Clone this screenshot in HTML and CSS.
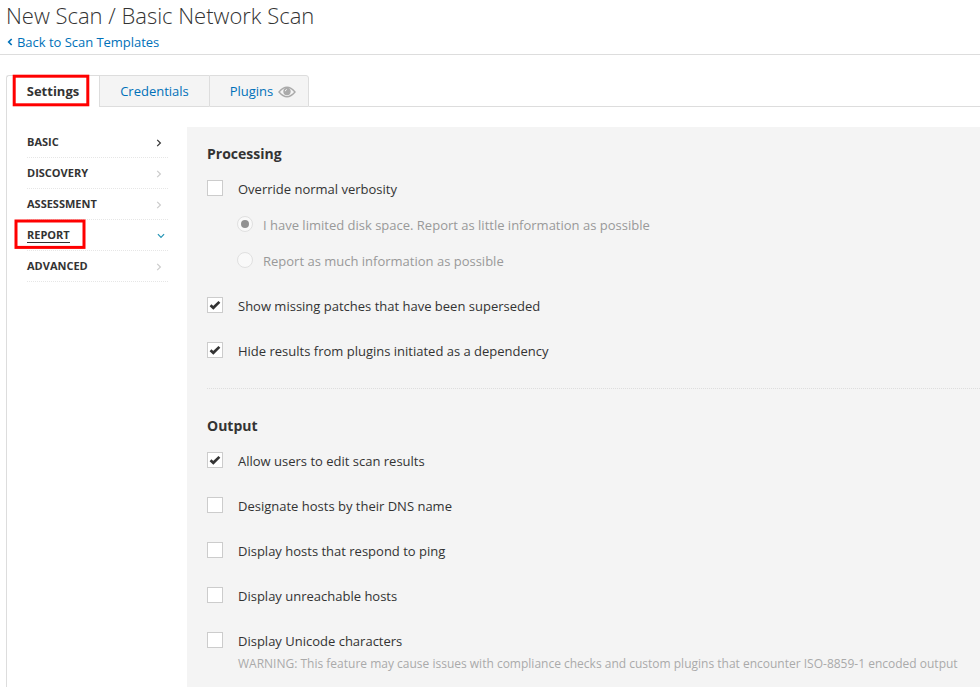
FILE: index.html
```html
<!DOCTYPE html>
<html lang="en">
<head>
<meta charset="utf-8">
<title>New Scan / Basic Network Scan</title>
<link rel="stylesheet" href="styles.css">
</head>
<body>
<svg class="defs" width="0" height="0" aria-hidden="true">
  <symbol id="chevron" viewBox="0 0 6 8"><path d="M1.2 .9 4.4 4 1.2 7.1" fill="none" stroke="currentColor" stroke-width="1.2"/></symbol>
  <symbol id="check" viewBox="0 0 12 10"><path d="M1.5 5.3 4.3 7.8 10.4 1.9" fill="none" stroke="#333" stroke-width="2.7"/></symbol>
</svg>
<header class="header">
  <h1>New Scan / Basic Network Scan</h1>
  <a class="back"><svg width="6" height="8" viewBox="0 0 6 8"><path d="M4.7 1 1.7 4l3 3" fill="none" stroke="currentColor" stroke-width="1.7"/></svg>Back to Scan Templates</a>
</header>
<nav class="tabs">
  <a class="tab active"><span>Settings</span><svg class="mark" width="78" height="33"><rect x="2.2" y="2.2" width="73.6" height="28.6" fill="none" stroke="#f00" stroke-width="3"/></svg></a>
  <a class="tab credentials">Credentials</a>
  <a class="tab plugins">Plugins
    <svg width="18" height="12" viewBox="0 0 18 12"><path d="M1 6Q9-3.4 17 6 9 15.4 1 6Z" fill="#f4f4f4" stroke="#aaa" stroke-width="1.4"/><circle cx="9" cy="5.5" r="3.7" fill="#aaa"/><path d="M7.3 5.2a1.8 1.8 0 0 1 1.5-1.7" fill="none" stroke="#f4f4f4" stroke-width="1"/></svg>
  </a>
</nav>
<div class="body">
  <nav class="menu">
    <a class="current">BASIC<svg class="arrow"><use href="#chevron"/></svg></a>
    <a>DISCOVERY<svg class="arrow"><use href="#chevron"/></svg></a>
    <a>ASSESSMENT<svg class="arrow"><use href="#chevron"/></svg></a>
    <a class="open"><span>REPORT</span><svg class="arrow"><use href="#chevron"/></svg><svg class="mark" width="73" height="31"><rect x="2" y="2" width="68" height="26.4" fill="none" stroke="#f00" stroke-width="3"/></svg></a>
    <a>ADVANCED<svg class="arrow"><use href="#chevron"/></svg></a>
  </nav>
  <main class="panel">
    <section>
      <h2>Processing</h2>
      <div class="option"><i class="box"></i><span>Override normal verbosity</span></div>
      <div class="choices">
        <div class="choice"><i class="radio on"></i><span>I have limited disk space. Report as little information as possible</span></div>
        <div class="choice"><i class="radio"></i><span>Report as much information as possible</span></div>
      </div>
      <div class="option"><i class="box"><svg><use href="#check"/></svg></i><span>Show missing patches that have been superseded</span></div>
      <div class="option"><i class="box"><svg><use href="#check"/></svg></i><span>Hide results from plugins initiated as a dependency</span></div>
    </section>
    <section>
      <h2>Output</h2>
      <div class="option"><i class="box"><svg><use href="#check"/></svg></i><span>Allow users to edit scan results</span></div>
      <div class="option"><i class="box"></i><span>Designate hosts by their DNS name</span></div>
      <div class="option"><i class="box"></i><span>Display hosts that respond to ping</span></div>
      <div class="option"><i class="box"></i><span>Display unreachable hosts</span></div>
      <div class="option"><i class="box"></i><span>Display Unicode characters<small>WARNING: This feature may cause issues with compliance checks and custom plugins that encounter ISO-8859-1 encoded output</small></span></div>
    </section>
  </main>
</div>
</body>
</html>
```
FILE: styles.css
```css
*, ::before, ::after { box-sizing: border-box; }
body { margin: 0; height: 687px; overflow: hidden; background: #fff; color: #333; font: 13px/18px "Open Sans", sans-serif; }
svg { display: block; }
.defs { position: absolute; }
.header { height: 55px; padding: 0 6px; border-bottom: 1px solid #ddd; }
h1 { margin: 0; font-size: 22px; line-height: 30px; font-weight: 300; letter-spacing: -.01px; }
.back { display: flex; align-items: center; gap: 4px; margin-top: 3px; padding-left: 1px; color: #0071b9; letter-spacing: -.03px; }
.tabs { display: flex; height: 32px; margin: 20px 0 0 6px; }
.tabs::after { content: ""; flex: 1; border-bottom: 1px solid #ddd; }
.tab { display: flex; align-items: center; justify-content: center; border: 1px solid #ddd; border-right: 0; background: #f4f4f4; color: #0071b9; }
.active { position: relative; width: 93px; padding-bottom: 1px; background: #fff; border-bottom: 0; border-top-left-radius: 3px; color: #333; font-weight: 700; }
.mark { position: absolute; }
.active .mark { left: 5px; top: -2px; }
.open .mark { left: -13px; top: -1px; }
.credentials { width: 110px; }
.plugins { width: 100px; gap: 6px; border-right: 1px solid #ddd; border-top-right-radius: 3px; padding-left: 8px; }
.plugins svg { margin: 2px 0 0 -1px; }
.body { display: flex; height: 580px; margin-left: 6px; padding: 20px 0 0 20px; border-left: 1px solid #ddd; }
.menu { width: 160px; padding-right: 19px; }
.menu a { position: relative; display: flex; align-items: center; justify-content: space-between; height: 31px; border-bottom: 1px dotted #e6e6e6; font-size: 11px; font-weight: 700; line-height: 16px; }
.arrow { width: 6px; height: 8px; margin: 2px 6px 0 0; color: #ccc; }
.current .arrow { color: #333; }
.open span { height: 16px; border-bottom: 1px solid #333; line-height: 16px; }
.open .arrow { margin-right: 4px; color: #2494b5; transform: rotate(90deg); }
.panel { flex: 1; min-width: 0; padding: 0 0 0 20px; background: #f4f4f4; }
section { height: 262px; padding-top: 18px; border-bottom: 1px dotted #ddd; }
section + section { height: 298px; padding-top: 28px; border-bottom: 0; }
h2 { margin: 0 0 17px; font-size: 14px; line-height: 18px; font-weight: 700; }
.option, .choice { display: flex; gap: 15px; }
.option { margin-bottom: 29px; height: 16px; white-space: nowrap; }
.box { display: flex; align-items: center; justify-content: center; flex: none; width: 16px; height: 16px; border: 1px solid #ccc; background: #fff; }
.box svg { width: 12px; height: 10px; }
small { display: block; margin-top: 5px; font-size: 12px; color: #aaa; }
.choices { margin: -9px 0 29px 30px; color: #999; }
.choice { gap: 10px; height: 16px; margin-bottom: 20px; }
.radio { display: flex; align-items: center; justify-content: center; width: 16px; height: 16px; border: 1px solid #e0e0e0; border-radius: 50%; background: #f9f9f9; }
.on::after { content: ""; width: 8px; height: 8px; border-radius: 50%; background: #919191; }
```
